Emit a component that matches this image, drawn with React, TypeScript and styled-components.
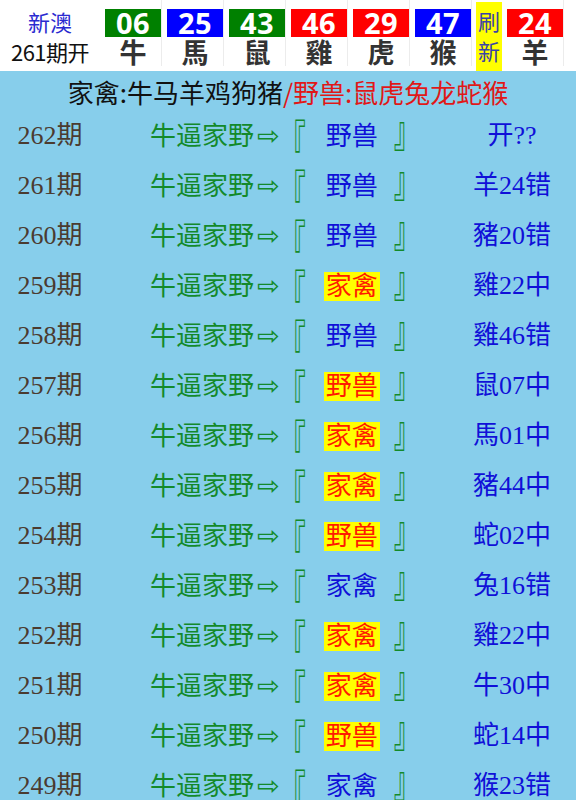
import React from 'react';
import styled, { createGlobalStyle } from 'styled-components';

type Pick = '家禽' | '野兽';

interface Row {
  period: number;
  pick: Pick;
  hit: boolean;
  result: string;
}

const draws = [
  { num: '06', animal: '牛', color: '#008000' },
  { num: '25', animal: '馬', color: '#0000ff' },
  { num: '43', animal: '鼠', color: '#008000' },
  { num: '46', animal: '雞', color: '#ff0000' },
  { num: '29', animal: '虎', color: '#ff0000' },
  { num: '47', animal: '猴', color: '#0000ff' },
];

const rows: Row[] = [
  { period: 262, pick: '野兽', hit: false, result: '开??' },
  { period: 261, pick: '野兽', hit: false, result: '羊24错' },
  { period: 260, pick: '野兽', hit: false, result: '豬20错' },
  { period: 259, pick: '家禽', hit: true, result: '雞22中' },
  { period: 258, pick: '野兽', hit: false, result: '雞46错' },
  { period: 257, pick: '野兽', hit: true, result: '鼠07中' },
  { period: 256, pick: '家禽', hit: true, result: '馬01中' },
  { period: 255, pick: '家禽', hit: true, result: '豬44中' },
  { period: 254, pick: '野兽', hit: true, result: '蛇02中' },
  { period: 253, pick: '家禽', hit: false, result: '兔16错' },
  { period: 252, pick: '家禽', hit: true, result: '雞22中' },
  { period: 251, pick: '家禽', hit: true, result: '牛30中' },
  { period: 250, pick: '野兽', hit: true, result: '蛇14中' },
  { period: 249, pick: '家禽', hit: false, result: '猴23错' },
];

const GlobalStyle = createGlobalStyle`
  html, body {
    margin: 0;
    padding: 0;
    background: #87ceeb;
  }
  body {
    font-family: "Noto Sans CJK SC", "Noto Sans", sans-serif;
  }
`;

const App: React.FC = () => {
  return (
    <>
      <GlobalStyle />
      <Page>
        <Header>
          <IssueCell>
            <Site>新澳</Site>
            <Issue>261期开</Issue>
          </IssueCell>
          {draws.map((d) => (
            <Ball key={d.num}>
              <Num color={d.color}>{d.num}</Num>
              <Animal>{d.animal}</Animal>
            </Ball>
          ))}
          <Refresh>
            <span>刷</span>
            <span>新</span>
          </Refresh>
          <Ball>
            <Num color="#ff0000">24</Num>
            <Animal>羊</Animal>
          </Ball>
        </Header>
        <Board>
          <Title>
            家禽:牛马羊鸡狗猪<Wild>/野兽:鼠虎兔龙蛇猴</Wild>
          </Title>
          {rows.map((r) => (
            <Line key={r.period}>
              <Period>{r.period}期</Period>
              <Tip>
                牛逼家野<Arrow>⇨</Arrow>
                <Bracket side="open">『</Bracket>
                <Answer hit={r.hit}>{r.pick}</Answer>
                <Bracket side="close">』</Bracket>
              </Tip>
              <Result>{r.result}</Result>
            </Line>
          ))}
        </Board>
      </Page>
    </>
  );
};

const Page = styled.div`
  width: 576px;
  min-height: 800px;
  background: #87ceeb;
  overflow: hidden;
`;

const Header = styled.div`
  display: flex;
  align-items: stretch;
  height: 71px;
  background: #ffffff;
`;

const IssueCell = styled.div`
  width: 100px;
  display: flex;
  flex-direction: column;
  align-items: center;
  padding-top: 6px;
  font-size: 22px;
  line-height: 30px;
`;

const Site = styled.div`
  color: #2a2ad0;
`;

const Issue = styled.div`
  color: #111111;
  letter-spacing: -0.5px;
`;

const Ball = styled.div`
  width: 56px;
  margin-left: 5px;
  display: flex;
  flex-direction: column;
  padding-top: 9px;
  border-right: 1px solid #ececec;
  margin-bottom: 5px;
`;

const Num = styled.div<{ color: string }>`
  background: ${(p) => p.color};
  color: #ffffff;
  font-family: "Open Sans", "Noto Sans", sans-serif;
  font-weight: 700;
  font-size: 29px;
  line-height: 28px;
  height: 28px;
  text-align: center;
  letter-spacing: 0.5px;
`;

const Animal = styled.div`
  color: #333333;
  font-weight: 700;
  font-size: 27px;
  line-height: 29px;
  text-align: center;
`;

const Refresh = styled.div`
  width: 26px;
  margin: 2px 0 0 4px;
  background: #ffff00;
  color: #3a43a8;
  font-size: 22px;
  line-height: 30px;
  display: flex;
  flex-direction: column;
  align-items: center;
  padding-top: 3px;
`;

const Board = styled.div`
  display: flex;
  flex-direction: column;
`;

const Title = styled.div`
  height: 40px;
  line-height: 42px;
  text-align: center;
  font-size: 26px;
  color: #111111;
`;

const Wild = styled.span`
  color: #e01818;
`;

const Line = styled.div`
  display: grid;
  grid-template-columns: 100px 358px 108px;
  height: 50px;
  align-items: center;
  font-family: "Liberation Serif", "Noto Sans CJK SC", serif;
  font-size: 26px;
  line-height: 30px;
`;

const Period = styled.div`
  color: #4b3b30;
  text-align: center;
`;

const Tip = styled.div`
  color: #138a2a;
  padding-left: 50px;
  white-space: pre;
`;

const Arrow = styled.span`
  font-family: "DejaVu Sans", sans-serif;
  font-size: 27px;
  margin: 0 0 0 3px;
`;

const Bracket = styled.span<{ side: 'open' | 'close' }>`
  display: inline-block;
  transform: ${(p) => (p.side === 'open' ? 'translateY(1px) scaleY(1.9)' : 'translateY(1px) scaleY(1.65)')};
  transform-origin: ${(p) => (p.side === 'open' ? 'center 6px' : 'center 22px')};
`;

const Answer = styled.span<{ hit: boolean }>`
  color: ${(p) => (p.hit ? '#ff1a00' : '#1010d8')};
  background: ${(p) => (p.hit ? '#ffff00' : 'transparent')};
  padding: 0 2px;
  margin: 0 14px 0 18px;
`;

const Result = styled.div`
  color: #1010d8;
  text-align: center;
`;

export default App;
